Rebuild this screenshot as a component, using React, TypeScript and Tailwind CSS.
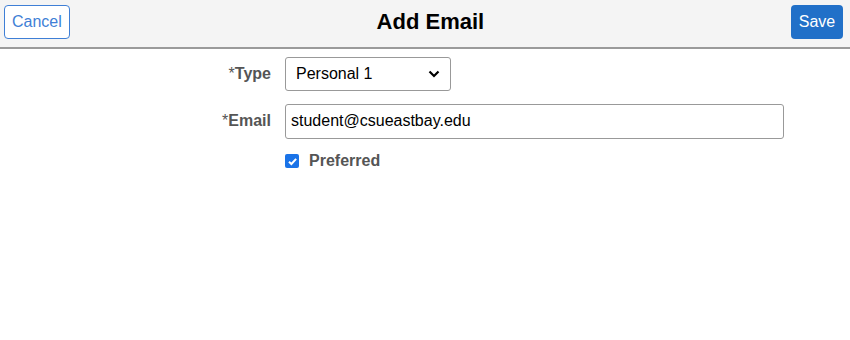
import React from "react";

export default function App() {
  return (
    <div className="w-[850px] h-[340px] bg-white font-['Liberation_Sans',Arial,sans-serif]">
      <div className="h-[49px] bg-[#f4f4f4] border-b-2 border-[#9a9a9a] flex items-center px-[4px] pb-[4px]">
        <button className="h-[34px] px-[7px] border border-[#3f7fd6] rounded-[4px] bg-white text-[#3f7fd6] text-[16px]">
          Cancel
        </button>
        <div className="flex-1 text-center text-[22px] font-bold text-black">
          Add Email
        </div>
        <button className="h-[34px] w-[52px] mr-[3px] rounded-[4px] bg-[#2170c8] text-white text-[16px]">
          Save
        </button>
      </div>
      <div className="flex flex-col pt-[8px]">
        <div className="flex items-center h-[34px]">
          <div className="w-[272px] text-right pr-[1px] text-[16px] font-bold text-[#555]">
            <span className="font-normal">*</span>Type
          </div>
          <div className="ml-[13px] w-[166px] h-[34px] border border-[#999] rounded-[3px] bg-white flex items-center justify-between pl-[10px] pr-[10px] text-[16px] text-black">
            <span>Personal 1</span>
            <svg width="12" height="8" viewBox="0 0 12 8">
              <path d="M1.5 1.5 L6 6 L10.5 1.5" fill="none" stroke="#000" strokeWidth="2.2" />
            </svg>
          </div>
        </div>
        <div className="flex items-center h-[34px] mt-[13px]">
          <div className="w-[272px] text-right pr-[1px] text-[16px] font-bold text-[#555]">
            <span className="font-normal">*</span>Email
          </div>
          <div className="ml-[13px] w-[499px] h-[35px] border border-[#999] rounded-[3px] bg-white flex items-center pl-[5px] text-[16px] text-black">
            student@csueastbay.edu
          </div>
        </div>
        <div className="flex items-center mt-[11px] ml-[285px]">
          <div className="shrink-0 w-[14px] h-[14px] rounded-[2px] bg-[#1a73e8] flex items-center justify-center">
            <svg width="11" height="11" viewBox="0 0 10 10">
              <path d="M1.8 5.2 L4 7.3 L8.3 2.6" fill="none" stroke="#fff" strokeWidth="1.8" />
            </svg>
          </div>
          <span className="ml-[10px] text-[16px] font-bold text-[#555]">Preferred</span>
        </div>
      </div>
    </div>
  );
}
